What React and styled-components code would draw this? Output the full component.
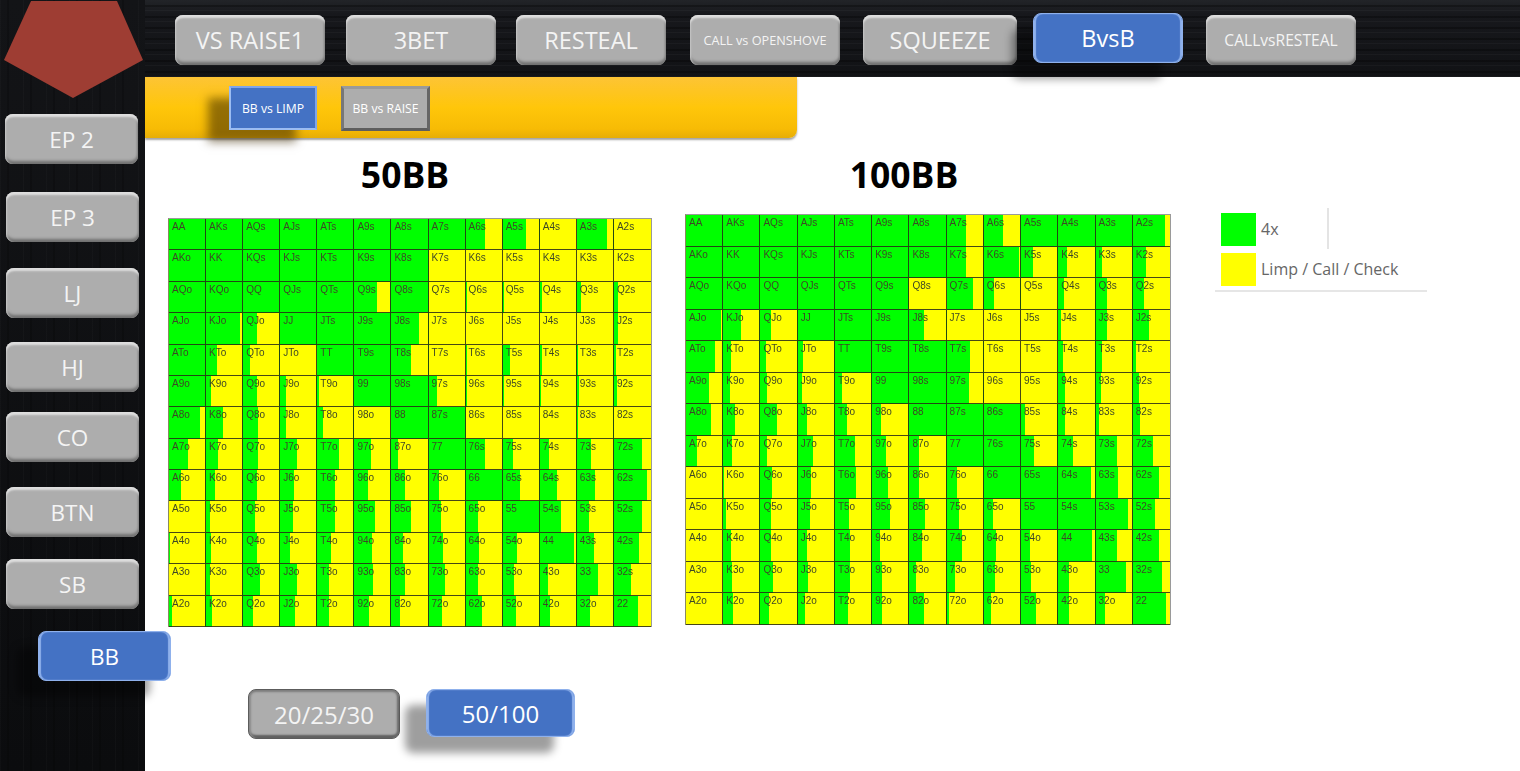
import styled, { createGlobalStyle, css } from "styled-components";

const RANKS = ["A", "K", "Q", "J", "T", "9", "8", "7", "6", "5", "4", "3", "2"];

// percentage of each cell that is green, row by row
const RANGE_50 = [
  [100, 100, 100, 100, 100, 100, 100, 100, 52, 63, 0, 83, 0],
  [100, 100, 100, 100, 100, 100, 100, 0, 0, 0, 0, 0, 0],
  [100, 100, 100, 100, 100, 65, 100, 0, 4, 3, 5, 12, 10],
  [100, 95, 40, 100, 100, 100, 77, 0, 0, 0, 0, 0, 12],
  [100, 30, 20, 0, 100, 100, 53, 0, 3, 20, 6, 4, 6],
  [100, 15, 38, 16, 5, 100, 100, 23, 2, 2, 4, 6, 7],
  [85, 48, 43, 16, 18, 0, 100, 100, 0, 0, 0, 3, 0],
  [52, 33, 43, 47, 60, 46, 18, 100, 52, 29, 25, 40, 77],
  [34, 25, 40, 39, 50, 40, 37, 27, 100, 46, 47, 50, 88],
  [0, 12, 33, 36, 50, 57, 55, 32, 32, 100, 59, 34, 75],
  [2, 14, 38, 27, 40, 50, 32, 40, 35, 38, 95, 47, 67],
  [0, 12, 48, 47, 32, 53, 37, 45, 32, 30, 21, 58, 47],
  [7, 17, 29, 42, 34, 43, 25, 37, 44, 35, 27, 36, 65],
];

const RANGE_100 = [
  [100, 100, 100, 100, 100, 100, 100, 54, 54, 100, 100, 100, 87],
  [100, 100, 100, 100, 100, 100, 100, 52, 96, 34, 24, 17, 34],
  [100, 100, 100, 100, 100, 100, 0, 73, 28, 0, 16, 30, 29],
  [98, 49, 31, 100, 100, 100, 40, 0, 0, 0, 8, 30, 42],
  [80, 22, 17, 15, 100, 100, 100, 64, 0, 0, 13, 17, 7],
  [64, 20, 20, 12, 20, 100, 100, 60, 0, 0, 18, 13, 15],
  [70, 34, 47, 26, 33, 24, 100, 100, 100, 12, 20, 9, 20],
  [31, 25, 18, 42, 55, 38, 27, 100, 100, 36, 40, 59, 55],
  [0, 2, 33, 37, 58, 44, 28, 29, 100, 100, 90, 62, 71],
  [0, 9, 30, 34, 38, 49, 43, 33, 26, 100, 100, 88, 60],
  [0, 22, 29, 26, 41, 21, 36, 43, 34, 26, 93, 57, 71],
  [0, 24, 35, 29, 42, 28, 18, 21, 31, 28, 31, 82, 78],
  [0, 29, 23, 19, 35, 29, 40, 6, 20, 41, 31, 24, 88],
];

const handLabel = (row, col) => {
  if (row === col) return RANKS[row] + RANKS[col];
  if (col > row) return RANKS[row] + RANKS[col] + "s";
  return RANKS[col] + RANKS[row] + "o";
};

const GlobalStyle = createGlobalStyle`
  html, body {
    margin: 0;
    padding: 0;
    background: #fff;
  }
  body {
    font-family: "Open Sans", "Noto Sans", sans-serif;
  }
`;

const Page = styled.div`
  display: flex;
  width: 1520px;
  height: 771px;
  overflow: hidden;
`;

const Sidebar = styled.aside`
  position: relative;
  z-index: 3;
  flex: 0 0 145px;
  width: 145px;
  min-width: 0;
  display: flex;
  flex-direction: column;
  align-items: flex-start;
  background-color: #0c0d0f;
  background-image:
    repeating-linear-gradient(90deg, rgba(255, 255, 255, 0.018) 0 1px, transparent 1px 7px, rgba(0, 0, 0, 0.2) 7px 9px, transparent 9px 23px),
    linear-gradient(180deg, #131417 0%, #0b0c0e 100%);
`;

const Logo = styled.svg`
  display: block;
  flex: none;
  width: 145px;
  height: 98px;
`;

const Content = styled.div`
  flex: 1;
  min-width: 0;
  display: flex;
  flex-direction: column;
`;

const TopBar = styled.nav`
  position: relative;
  z-index: 2;
  flex: 0 0 77px;
  box-sizing: border-box;
  height: 77px;
  display: flex;
  align-items: flex-start;
  padding-left: 30px;
  background-color: #121316;
  background-image:
    repeating-linear-gradient(0deg, rgba(255, 255, 255, 0.03) 0 1px, transparent 1px 4px, rgba(0, 0, 0, 0.3) 4px 6px, transparent 6px 11px),
    linear-gradient(180deg, #222428 0, #17181c 14px, #111215 100%);
`;

const raised = css`
  box-sizing: border-box;
  display: flex;
  align-items: center;
  justify-content: center;
  flex: none;
  border-radius: 8px;
  color: #f4f4f4;
  white-space: nowrap;
`;

const greyBevel = css`
  background: #adadad;
  box-shadow:
    inset 0 4px 2px -1px #dedede,
    inset 3px 0 2px -2px #c8c8c8,
    inset -3px 0 2px -2px #7c7c7c,
    inset 0 -4px 3px -1px #707070;
`;

const blueBevel = css`
  background: #4472c4;
  border: 1px solid #8fb1ec;
  color: #fff;
  box-shadow:
    inset 2px 0 1px 0 #8fb1ec,
    inset -2px 0 1px 0 #8fb1ec,
    -21px 16px 8px rgba(0, 0, 0, 0.38);
`;

const NavButton = styled.button`
  ${raised}
  padding: 0;
  border: none;
  font-family: inherit;
  width: ${(p) => p.$width || 150}px;
  height: 50px;
  margin-top: ${(p) => (p.$active ? 13 : 15)}px;
  margin-left: ${(p) => p.$left || 0}px;
  font-size: ${(p) => p.$size || 23.5}px;
  ${(p) => (p.$active ? blueBevel : greyBevel)}
`;

const SideButton = styled.button`
  ${raised}
  padding: 0;
  border: none;
  font-family: inherit;
  width: 133px;
  height: 50px;
  margin-top: ${(p) => p.$top}px;
  margin-left: ${(p) => p.$left}px;
  font-size: 22.5px;
  ${(p) => (p.$active ? blueBevel : greyBevel)}
`;

const Main = styled.main`
  flex: 1;
  position: relative;
  z-index: 1;
  display: flex;
  flex-direction: column;
  background: #fff;
`;

const SubBar = styled.div`
  box-sizing: border-box;
  flex: none;
  width: 652px;
  height: 61px;
  display: flex;
  align-items: flex-start;
  gap: 24px;
  padding: 9px 0 0 84px;
  background: linear-gradient(180deg, #fdc435 0%, #ffc60a 50%, #f7bb05 85%, #e6ad08 100%);
  border-radius: 0 0 8px 0;
  box-shadow: 0 2px 2px rgba(90, 90, 90, 0.55);
`;

const SubButton = styled.button`
  box-sizing: border-box;
  flex: none;
  height: ${(p) => (p.$active ? 44 : 45)}px;
  width: ${(p) => (p.$active ? 88 : 89)}px;
  padding: 0;
  border-style: solid;
  font-family: inherit;
  font-size: 12.2px;
  white-space: nowrap;
  color: #fff;
  ${(p) =>
    p.$active
      ? css`
          border-width: 2px;
          background: #4472c4;
          border-color: #7fa5ea #7fa5ea #9bbcf2 #9bbcf2;
          box-shadow: -21px 12px 9px rgba(60, 40, 0, 0.55);
        `
      : css`
          border-width: 3px;
          background: #adadad;
          border-color: #9a9a9a #666 #5e5e5e #777;
        `}
`;

const ChartsRow = styled.section`
  flex: none;
  display: flex;
  align-items: flex-start;
  padding-left: 23px;
`;

const ChartColumn = styled.div`
  flex: none;
  width: ${(p) => p.$width}px;
  margin-left: ${(p) => p.$left || 0}px;
`;

const ChartTitle = styled.h2`
  margin: 0;
  height: ${(p) => p.$height}px;
  padding: 11px ${(p) => p.$inset}px 0 0;
  box-sizing: border-box;
  text-align: center;
  font-size: 35.5px;
  line-height: 50px;
  font-weight: 700;
  color: #000;
`;

const Grid = styled.div`
  box-sizing: border-box;
  display: grid;
  grid-template-columns: repeat(13, 1fr);
  grid-template-rows: repeat(13, 1fr);
  height: ${(p) => p.$height}px;
  border-top: 1px solid #9a9a9a;
  border-left: 1px solid #8a8a60;
  border-right: 1px solid #9a9a9a;
  filter: blur(0.5px);
`;

const Cell = styled.div`
  box-sizing: border-box;
  padding: 2px 0 0 3px;
  border-right: 1px solid rgba(40, 40, 24, 0.85);
  border-bottom: 1px solid rgba(40, 40, 24, 0.85);
  font-family: "Liberation Sans", Arial, sans-serif;
  font-size: 10px;
  line-height: 12px;
  color: #3d4726;
  overflow: hidden;

  &:nth-child(13n) {
    border-right: none;
  }
`;

const Legend = styled.aside`
  box-sizing: border-box;
  flex: none;
  width: 212px;
  margin: 70px 0 0 44px;
  padding: 0 0 4px 6px;
  border-bottom: 2px solid #e6e6e6;
  color: #666;
  font-size: 16px;
`;

const LegendRow = styled.div`
  box-sizing: border-box;
  display: flex;
  align-items: center;
  gap: 5px;
  ${(p) =>
    p.$divided
      ? css`
          width: 108px;
          padding: 5px 0 3px;
          border-right: 2px solid #e4e4e4;
        `
      : css`
          margin-top: 4px;
        `}
`;

const LegendLabel = styled.span`
  margin-top: -2px;
`;

const Swatch = styled.span`
  flex: none;
  width: 35px;
  height: 33px;
  background: ${(p) => p.$color};
`;

const Footer = styled.div`
  flex: none;
  display: flex;
  align-items: flex-start;
  gap: 26px;
  margin-top: 62px;
  padding-left: 103px;
`;

const StackButton = styled.button`
  ${raised}
  padding: 0;
  font-family: inherit;
  font-size: 24px;
  ${(p) =>
    p.$active
      ? css`
          width: 149px;
          height: 48px;
          ${blueBevel}
        `
      : css`
          width: 152px;
          height: 50px;
          border: 1px solid #5c5c5c;
          background: #adadad;
          box-shadow:
            inset 0 3px 2px -1px #7d7d7d,
            inset 3px 0 2px -1px #8c8c8c,
            inset -3px 0 2px -1px #6d6d6d,
            inset 0 -4px 2px -1px #5f5f5f;
        `}
`;

const NAV_ITEMS = [
  { label: "VS RAISE1" },
  { label: "3BET", left: 21 },
  { label: "RESTEAL", left: 20 },
  { label: "CALL vs OPENSHOVE", left: 24, size: 12.7 },
  { label: "SQUEEZE", left: 23, width: 154 },
  { label: "BvsB", left: 16, active: true },
  { label: "CALLvsRESTEAL", left: 23, size: 15.6 },
];

const SIDE_ITEMS = [
  { label: "EP 2", top: 16, left: 5 },
  { label: "EP 3", top: 28, left: 6 },
  { label: "LJ", top: 26, left: 6 },
  { label: "HJ", top: 24, left: 6 },
  { label: "CO", top: 20, left: 6 },
  { label: "BTN", top: 25, left: 6 },
  { label: "SB", top: 22, left: 6 },
  { label: "BB", top: 22, left: 38, active: true },
];

function RangeGrid({ data, height }) {
  return (
    <Grid $height={height}>
      {data.map((row, r) =>
        row.map((green, c) => (
          <Cell
            key={`${r}-${c}`}
            style={{
              background: `linear-gradient(90deg, #00ff00 ${green}%, #ffff00 ${green}%)`,
            }}
          >
            {handLabel(r, c)}
          </Cell>
        )),
      )}
    </Grid>
  );
}

function App() {
  return (
    <Page>
      <GlobalStyle />
      <Sidebar>
        <Logo viewBox="0 0 145 98">
          <polygon points="31,1 117,1 143,60 73,98 4,60" fill="#9e3d33" />
        </Logo>
        {SIDE_ITEMS.map((item) => (
          <SideButton
            key={item.label}
            $top={item.top}
            $left={item.left}
            $active={item.active}
          >
            {item.label}
          </SideButton>
        ))}
      </Sidebar>
      <Content>
        <TopBar>
          {NAV_ITEMS.map((item) => (
            <NavButton
              key={item.label}
              $left={item.left}
              $size={item.size}
              $width={item.width}
              $active={item.active}
            >
              {item.label}
            </NavButton>
          ))}
        </TopBar>
        <Main>
          <SubBar>
            <SubButton $active>BB vs LIMP</SubButton>
            <SubButton>BB vs RAISE</SubButton>
          </SubBar>
          <ChartsRow>
            <ChartColumn $width={484}>
              <ChartTitle $height={80} $inset={10}>
                50BB
              </ChartTitle>
              <RangeGrid data={RANGE_50} height={409} />
            </ChartColumn>
            <ChartColumn $width={486} $left={33}>
              <ChartTitle $height={76} $inset={48}>
                100BB
              </ChartTitle>
              <RangeGrid data={RANGE_100} height={411} />
            </ChartColumn>
            <Legend>
              <LegendRow $divided>
                <Swatch $color="#00ff00" />
                <LegendLabel>4x</LegendLabel>
              </LegendRow>
              <LegendRow>
                <Swatch $color="#ffff00" />
                <LegendLabel>Limp / Call / Check</LegendLabel>
              </LegendRow>
            </Legend>
          </ChartsRow>
          <Footer>
            <StackButton>20/25/30</StackButton>
            <StackButton $active>50/100</StackButton>
          </Footer>
        </Main>
      </Content>
    </Page>
  );
}

export default App;
